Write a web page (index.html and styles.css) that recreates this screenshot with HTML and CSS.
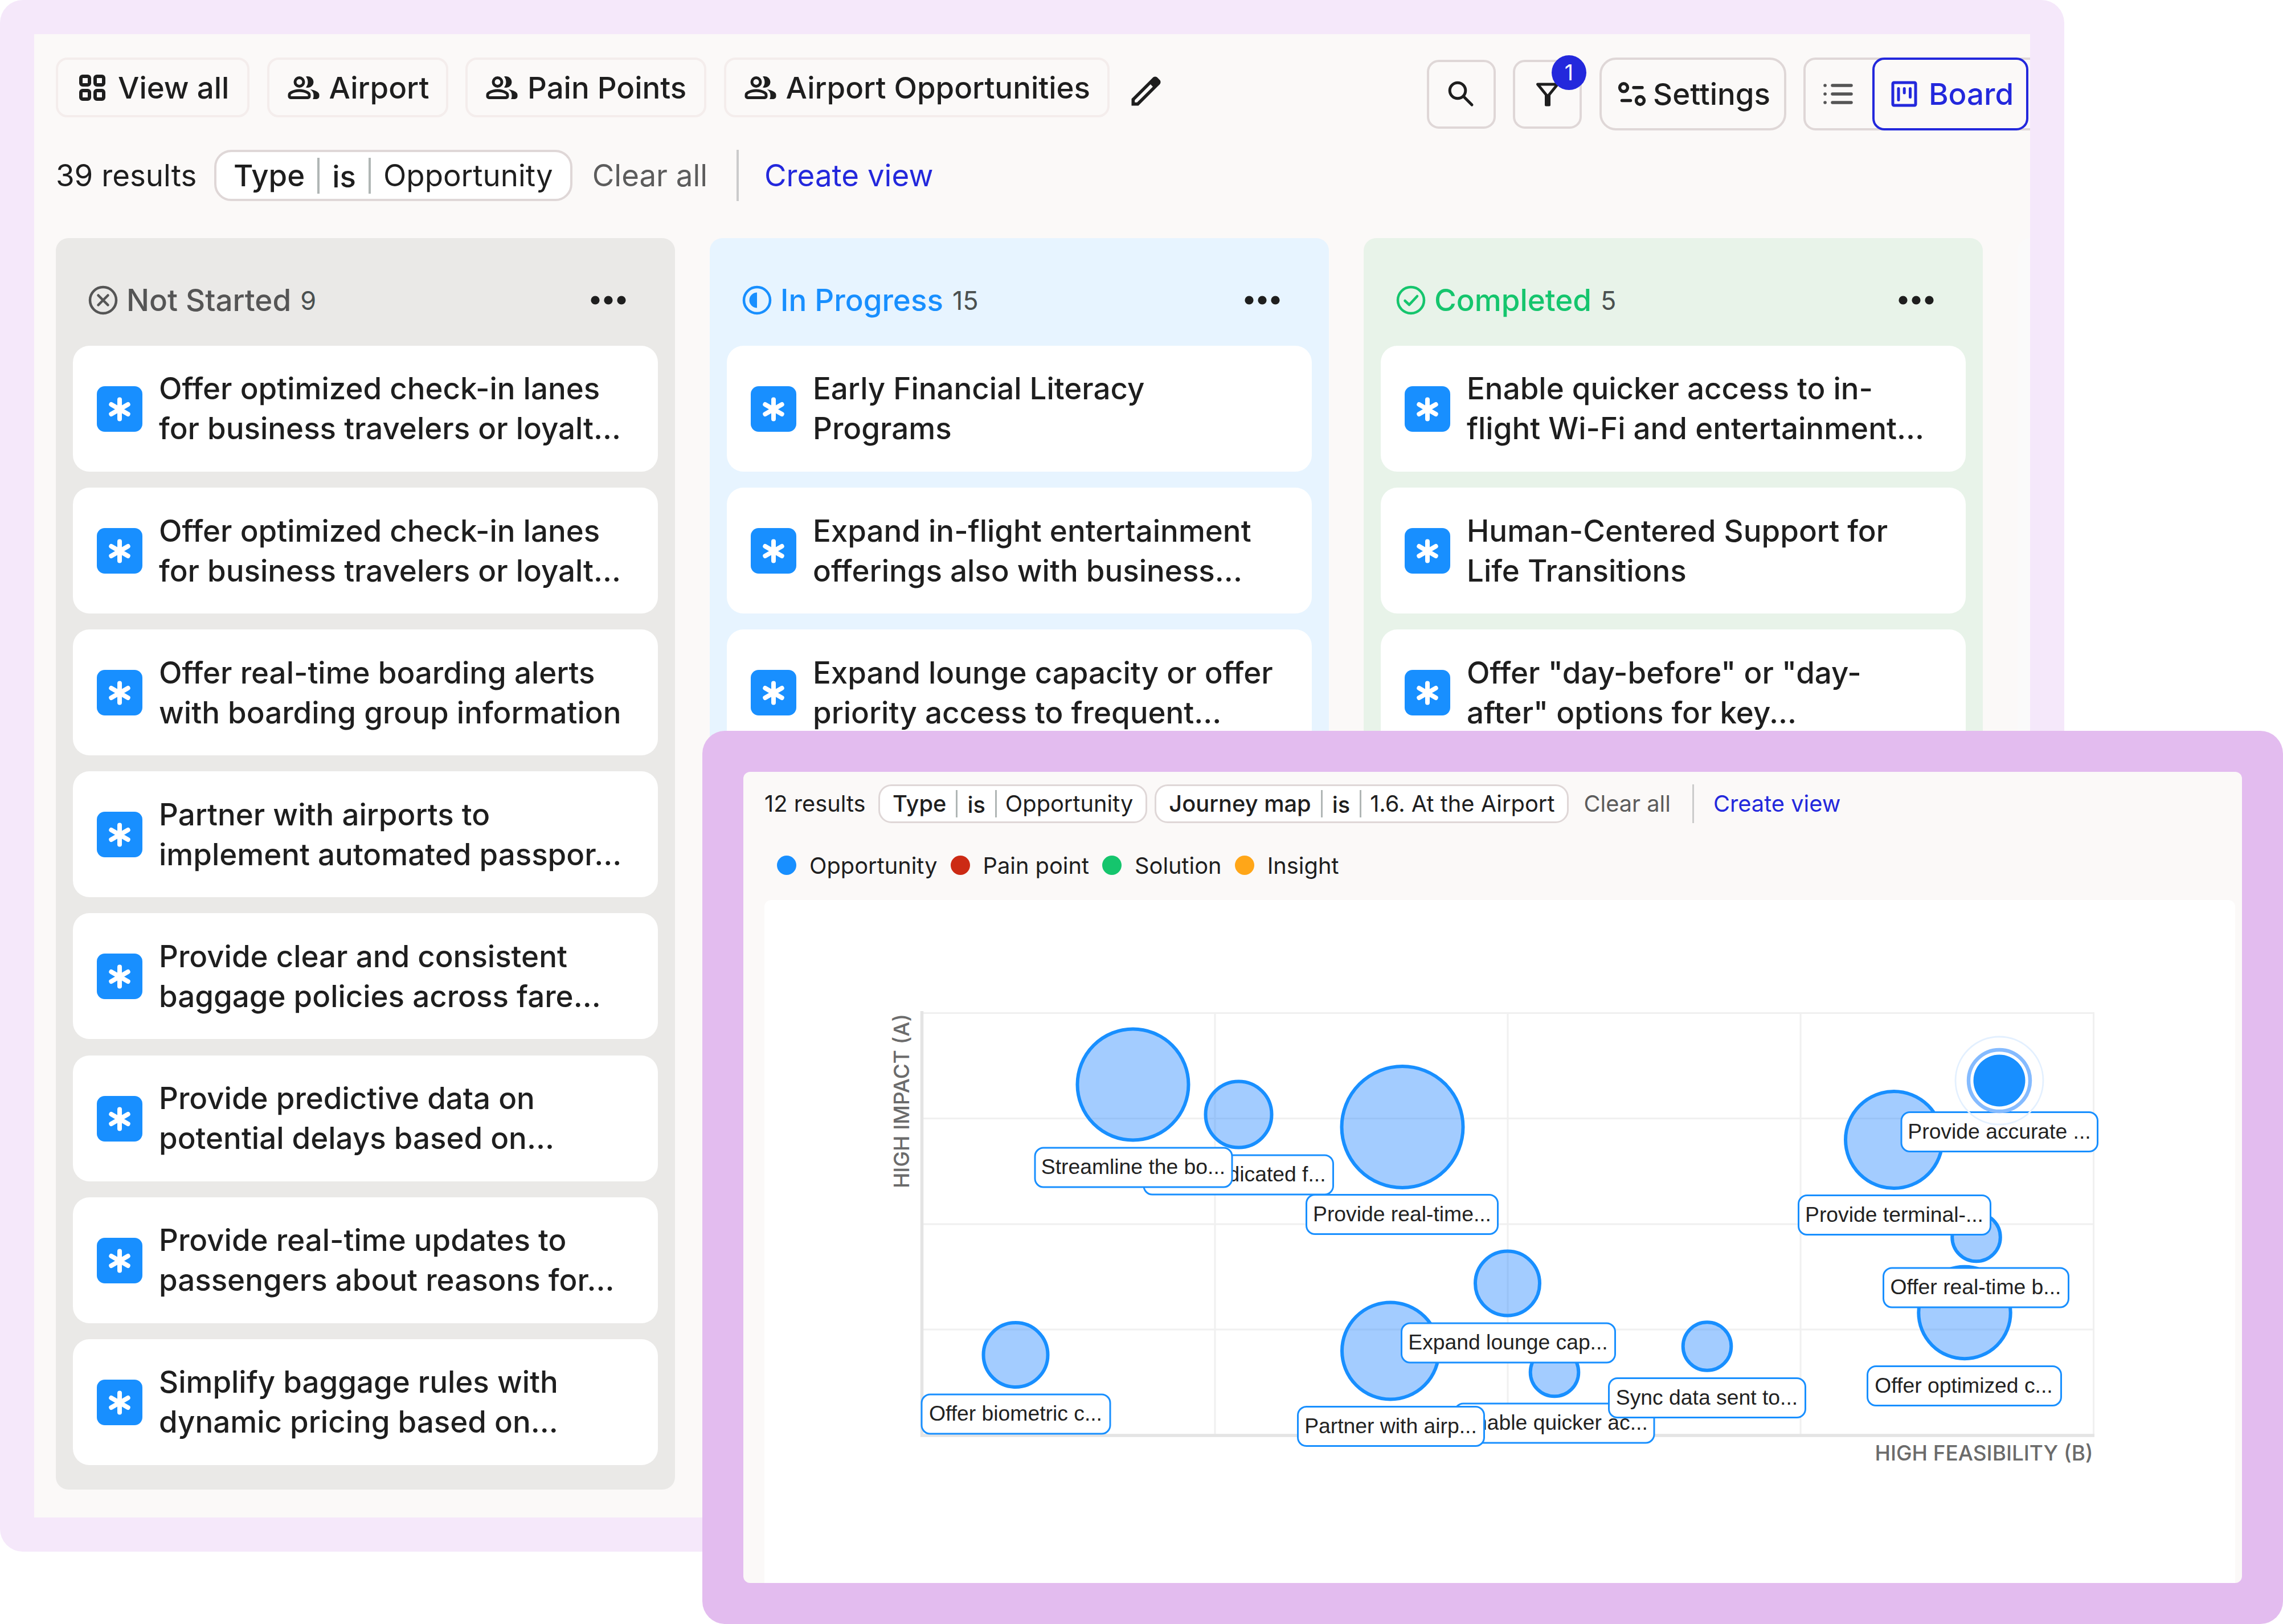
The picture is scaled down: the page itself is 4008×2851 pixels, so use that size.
FILE: index.html
```html
<!DOCTYPE html>
<html lang="en">
<head>
<meta charset="utf-8">
<title>Opportunities board</title>
<link rel="stylesheet" href="styles.css">
</head>
<body>
<svg class="defs" width="0" height="0" aria-hidden="true">
  <symbol id="people" viewBox="0 -960 960 960"><path d="M40-272q0-34 17.500-62.500T104-378q62-31 126-46.500T360-440q66 0 130 15.500T616-378q29 15 46.500 43.500T680-272v32q0 33-23.500 56.500T600-160H120q-33 0-56.500-23.500T40-240v-32Zm698 112q11-18 16.500-38.500T760-240v-40q0-44-24.500-84.500T666-434q51 6 96 20.500t84 35.500q36 20 55 44.500t19 53.500v40q0 33-23.500 56.500T840-160H738ZM360-480q-66 0-113-47t-47-113q0-66 47-113t113-47q66 0 113 47t47 113q0 66-47 113t-113 47Zm400-160q0 66-47 113t-113 47q-11 0-28-2.500t-28-5.500q27-32 41.500-71t14.500-81q0-42-14.500-81T544-792q14-5 28-6.500t28-1.500q66 0 113 47t47 113ZM120-240h480v-32q0-11-5.500-20T580-306q-54-27-109-40.500T360-360q-56 0-111 13.500T140-306q-9 5-14.500 14t-5.500 20v32Zm240-320q33 0 56.500-23.500T440-640q0-33-23.500-56.500T360-720q-33 0-56.500 23.500T280-640q0 33 23.500 56.500T360-560Z"/></symbol>
  <symbol id="star" viewBox="0 0 80 80"><path d="M40 23.500v34M25.300 32l29.400 17M54.700 32l-29.400 17" fill="none" stroke="#fff" stroke-width="8" stroke-linecap="round"/></symbol>
</svg>

<div class="window board-window">
  <main class="board">
    <header class="toolbar">
      <nav class="tabs">
        <a class="tab tab-all"><svg class="icon" viewBox="0 0 60 60"><g fill="none" stroke="currentColor" stroke-width="6"><rect x="10" y="10" width="15" height="15" rx="3"/><rect x="35" y="10" width="15" height="15" rx="3"/><rect x="10" y="35" width="15" height="15" rx="3"/><rect x="35" y="35" width="15" height="15" rx="3"/></g></svg><span>View all</span></a>
        <a class="tab tab-airport"><svg class="icon"><use href="#people"/></svg><span>Airport</span></a>
        <a class="tab tab-pain"><svg class="icon"><use href="#people"/></svg><span>Pain Points</span></a>
        <a class="tab tab-opps"><svg class="icon"><use href="#people"/></svg><span>Airport Opportunities</span></a>
        <svg class="icon pencil" viewBox="0 -960 960 960"><path d="M200-200h57l391-391-57-57-391 391v57Zm-80 80v-170l528-527q12-11 26.500-17t30.500-6q16 0 31 6t26 18l55 56q12 11 17.500 26t5.500 30q0 16-5.500 30.500T817-647L290-120H120Z"/></svg>
      </nav>
      <div class="tools">
        <button class="tool"><svg class="icon" viewBox="0 0 60 60"><g fill="none" stroke="currentColor" stroke-width="5" stroke-linecap="round"><circle cx="24" cy="24" r="13.800"/><path d="M34.500 34.500L49 49"/></g></svg></button>
        <button class="tool"><svg class="icon" viewBox="0 0 60 60"><path d="M12.500 13h35L30 34.500z" fill="none" stroke="currentColor" stroke-width="5" stroke-linejoin="round"/><path d="M25 31h10v18.500q0 2-2 2h-6q-2 0-2-2z" fill="currentColor"/></svg><span class="badge">1</span></button>
        <button class="settings"><svg class="icon" viewBox="0 0 60 60"><g fill="none" stroke="currentColor" stroke-width="5.400"><circle cx="15.500" cy="18.800" r="7"/><circle cx="44.500" cy="41.500" r="7"/><path d="M33 18.800h15M12.500 41.500h15" stroke-linecap="round"/></g></svg><span>Settings</span></button>
        <div class="switch">
          <button class="list"><svg class="icon" viewBox="0 0 60 60"><path d="M5 15h.1M5 30h.1M5 45h.1M18 15h33M18 30h33M18 45h33" fill="none" stroke="currentColor" stroke-width="5.500" stroke-linecap="round"/></svg></button>
          <button class="board-btn"><svg class="icon" viewBox="0 0 60 60"><g fill="none" stroke="currentColor" stroke-width="5" stroke-linecap="round"><rect x="10" y="10" width="40" height="40" rx="2"/><path d="M20 20.500v20M30.200 20.500v7.500M40.500 20.500v15"/></g></svg><span>Board</span></button>
        </div>
      </div>
    </header>

    <div class="filters">
      <span class="results">39 results</span>
      <div class="chip"><b>Type</b><i></i><b class="is">is</b><i></i><span>Opportunity</span></div>
      <span class="clear">Clear all</span>
      <hr>
      <a class="create">Create view</a>
    </div>

    <div class="columns">
      <section class="column gray">
        <h2><svg class="state" viewBox="0 0 52 52"><g fill="none" stroke="currentColor" stroke-width="4.500" stroke-linecap="round"><circle cx="26" cy="26" r="23"/><path d="M17.500 17.500l17 17M34.500 17.500l-17 17"/></g></svg><span class="name">Not Started</span><small>9</small><svg class="more" viewBox="0 0 62 16"><circle cx="8" cy="8" r="7.600"/><circle cx="31" cy="8" r="7.600"/><circle cx="54" cy="8" r="7.600"/></svg></h2>
        <article class="card"><svg class="type"><use href="#star"/></svg><p>Offer optimized check-in lanes<br>for business travelers or loyalt...</p></article>
        <article class="card"><svg class="type"><use href="#star"/></svg><p>Offer optimized check-in lanes<br>for business travelers or loyalt...</p></article>
        <article class="card"><svg class="type"><use href="#star"/></svg><p>Offer real-time boarding alerts<br>with boarding group information</p></article>
        <article class="card"><svg class="type"><use href="#star"/></svg><p>Partner with airports to<br>implement automated passpor...</p></article>
        <article class="card"><svg class="type"><use href="#star"/></svg><p>Provide clear and consistent<br>baggage policies across fare...</p></article>
        <article class="card"><svg class="type"><use href="#star"/></svg><p>Provide predictive data on<br>potential delays based on...</p></article>
        <article class="card"><svg class="type"><use href="#star"/></svg><p>Provide real-time updates to<br>passengers about reasons for...</p></article>
        <article class="card"><svg class="type"><use href="#star"/></svg><p>Simplify baggage rules with<br>dynamic pricing based on...</p></article>
      </section>
      <section class="column blue">
        <h2><svg class="state" viewBox="0 0 52 52"><circle cx="26" cy="26" r="23" fill="none" stroke="currentColor" stroke-width="4.500"/><path d="M26 12.500a13.500 13.500 0 0 0 0 27z" fill="currentColor"/></svg><span class="name">In Progress</span><small>15</small><svg class="more" viewBox="0 0 62 16"><circle cx="8" cy="8" r="7.600"/><circle cx="31" cy="8" r="7.600"/><circle cx="54" cy="8" r="7.600"/></svg></h2>
        <article class="card"><svg class="type"><use href="#star"/></svg><p>Early Financial Literacy<br>Programs</p></article>
        <article class="card"><svg class="type"><use href="#star"/></svg><p>Expand in-flight entertainment<br>offerings also with business...</p></article>
        <article class="card"><svg class="type"><use href="#star"/></svg><p>Expand lounge capacity or offer<br>priority access to frequent...</p></article>
      </section>
      <section class="column green">
        <h2><svg class="state" viewBox="0 0 52 52"><g fill="none" stroke="currentColor" stroke-width="4.500" stroke-linecap="round" stroke-linejoin="round"><circle cx="26" cy="26" r="23"/><path d="M15.500 27l7.500 7 14-15"/></g></svg><span class="name">Completed</span><small>5</small><svg class="more" viewBox="0 0 62 16"><circle cx="8" cy="8" r="7.600"/><circle cx="31" cy="8" r="7.600"/><circle cx="54" cy="8" r="7.600"/></svg></h2>
        <article class="card"><svg class="type"><use href="#star"/></svg><p>Enable quicker access to in-<br>flight Wi-Fi and entertainment...</p></article>
        <article class="card"><svg class="type"><use href="#star"/></svg><p>Human-Centered Support for<br>Life Transitions</p></article>
        <article class="card"><svg class="type"><use href="#star"/></svg><p>Offer "day-before" or "day-<br>after" options for key...</p></article>
      </section>
      <section class="column next"></section>
    </div>
  </main>
</div>

<div class="window chart-window">
  <main class="matrix">
    <div class="filters small">
      <span class="results">12 results</span>
      <div class="chip"><b>Type</b><i></i><b class="is">is</b><i></i><span>Opportunity</span></div>
      <div class="chip"><b>Journey map</b><i></i><b class="is">is</b><i></i><span>1.6. At the Airport</span></div>
      <span class="clear">Clear all</span>
      <hr>
      <a class="create">Create view</a>
    </div>
    <div class="legend">
      <span class="key opportunity">Opportunity</span>
      <span class="key pain">Pain point</span>
      <span class="key solution">Solution</span>
      <span class="key insight">Insight</span>
    </div>
    <div class="chart-card">
      <svg class="chart" viewBox="1342 1580 2582 1199">
        <g class="grid">
          <path d="M1619 1778.500H3677M1619 1963.500H3677M1619 2149H3677M1619 2334H3677M2133 1778V2518M2647 1778V2518M3161 1778V2518M3675.500 1778V2518"/>
        </g>
        <path class="axis" d="M1618.500 1775V2520H3677"/>
        <g class="bubbles">
          <circle cx="1989" cy="1904" r="97.500"/>
          <circle cx="2174.500" cy="1956.500" r="58"/>
          <circle cx="2462" cy="1978.500" r="106.500"/>
          <circle cx="2646.500" cy="2253" r="56.500"/>
          <circle cx="2441" cy="2371.500" r="85"/>
          <circle cx="1783" cy="2378.500" r="56.500"/>
          <circle cx="2729" cy="2409" r="42.300"/>
          <circle cx="2997" cy="2363.500" r="42.300"/>
          <circle cx="3325" cy="2001" r="85"/>
          <circle cx="3469.500" cy="2172" r="42.300"/>
          <circle cx="3449" cy="2304.500" r="80.700"/>
        </g>
        <g class="labels">
          <rect x="2008" y="2028" width="332.500" height="69"/><text x="2174.500" y="2074">Offer dedicated f...</text>
          <rect x="1817" y="2015" width="346" height="69"/><text x="1989.500" y="2061">Streamline the bo...</text>
          <rect x="2293.500" y="2097.500" width="336" height="69"/><text x="2461.500" y="2143.500">Provide real-time...</text>
          <rect x="2554" y="2464" width="350" height="69"/><text x="2729" y="2510">Enable quicker ac...</text>
          <rect x="2460.500" y="2323" width="375" height="69"/><text x="2647.500" y="2369">Expand lounge cap...</text>
          <rect x="2278.500" y="2469.500" width="327" height="69"/><text x="2441.500" y="2515.500">Partner with airp...</text>
          <rect x="1618" y="2448" width="331" height="69"/><text x="1783" y="2494">Offer biometric c...</text>
          <rect x="2824.500" y="2419.500" width="345" height="69"/><text x="2996.500" y="2465.500">Sync data sent to...</text>
          <rect x="3157.500" y="2098.500" width="337" height="69"/><text x="3325.500" y="2144.500">Provide terminal-...</text>
          <rect x="3338" y="1952.500" width="344.500" height="69"/><text x="3510" y="1998.500">Provide accurate ...</text>
          <rect x="3306.500" y="2226" width="325" height="69"/><text x="3468.500" y="2272">Offer real-time b...</text>
          <rect x="3278.500" y="2398.500" width="340" height="69"/><text x="3447.500" y="2444.500">Offer optimized c...</text>
        </g>
        <g class="selected">
          <circle class="dot" cx="3510" cy="1897" r="45.500"/>
          <circle class="ring" cx="3510" cy="1897" r="54"/>
          <circle class="halo" cx="3510" cy="1897" r="77"/>
        </g>
        <text class="axis-name" text-anchor="end" x="3674.500" y="2564">HIGH FEASIBILITY (B)</text>
        <text class="axis-name" text-anchor="end" transform="translate(1596 1780) rotate(-90)">HIGH IMPACT (A)</text>
      </svg>
    </div>
  </main>
</div>
</body>
</html>
```
FILE: styles.css
```css
* { box-sizing: border-box; }

body {
  margin: 0;
  width: 4008px;
  height: 2851px;
  position: relative;
  overflow: hidden;
  background: #fff;
  color: #1e1e1e;
  font-family: Inter, "Liberation Sans", sans-serif;
  font-size: 52.800px;
  line-height: 70px;
}

.defs { position: absolute; }
.icon { width: 60px; height: 60px; flex: none; fill: currentColor; }

.window { border-radius: 40px; }
.board-window { width: 3624px; height: 2724px; padding: 60px; background: #f5e8fa; }
.board { width: 3504px; height: 2604px; padding: 41px 0 0 38px; background: #fbf9f8; overflow: hidden; }

/* toolbar */
.toolbar { display: flex; height: 162px; align-items: flex-start; }
.tabs { display: flex; gap: 30.500px; align-items: center; height: 105px; }
.tab {
  display: flex;
  align-items: center;
  gap: 15px;
  height: 105px;
  padding-left: 30px;
  border: 4px solid #f4edec;
  border-radius: 20px;
  font-weight: 500;
  white-space: nowrap;
}
.tab-all { width: 340px; }
.tab-airport { width: 318px; }
.tab-pain { width: 423px; }
.tab-opps { width: 677px; }
.pencil { width: 68px; height: 68px; margin-top: 13px; }

.tools { display: flex; gap: 30.500px; align-items: center; margin-left: auto; margin-right: -98px; }
button {
  display: flex;
  align-items: center;
  justify-content: center;
  padding: 0;
  background: none;
  border: 4px solid #dfd7d7;
  color: inherit;
  font: inherit;
  font-weight: 500;
}
.tool { position: relative; width: 121px; height: 121px; border-radius: 21px; }
.badge {
  position: absolute;
  top: -12px;
  right: -12px;
  width: 61px;
  height: 61px;
  border-radius: 50%;
  background: #2328dc;
  color: #fff;
  font-size: 37.5px;
  font-weight: 400;
  line-height: 61px;
  text-align: center;
}
.settings { width: 328px; height: 128px; gap: 7px; border-radius: 29px; }
.switch { display: flex; width: 496px; height: 128px; border: 4px solid #dfd7d7; border-radius: 21px; }
.list { width: 117px; height: 120px; border: 0; color: #555; }
.board-btn { width: 274px; height: 128px; margin-top: -4px; gap: 13px; border-color: #2328dc; border-radius: 21px; color: #2328dc; }

/* filter row */
.filters { display: flex; height: 90px; line-height: 90px; white-space: nowrap; }
.results { width: 278px; }
.chip {
  display: flex;
  align-items: center;
  padding: 0 30px;
  background: #fff;
  border: 4px solid #dfd7d7;
  border-radius: 30px;
}
.chip b { font-weight: 500; }
.chip .is { position: relative; top: 2px; }
.chip i { width: 4px; height: 63px; margin: 0 22px; background: #b0b6b5; }
.clear { margin-left: 35px; color: #5c5c5c; }
.filters hr { width: 4px; height: 90px; margin: 0 45px 0 51px; border: 0; background: #cbcbcb; }
.create { color: #2328dc; }

/* columns */
.columns { display: flex; gap: 61px; margin-top: 65px; }
.column {
  flex: none;
  display: flex;
  flex-direction: column;
  gap: 28.140px;
  width: 1087px;
  height: 2197px;
  padding: 0 30px;
  border-radius: 22px;
}
.gray { background: #eae9e7; color: #555; }
.blue { background: #e7f4ff; color: #188fff; }
.green { background: #e8f3e9; color: #15c56d; }
.next { background: #fafafa; }
.column h2 {
  display: flex;
  align-items: center;
  height: 160.860px;
  margin: 0;
  padding: 58px 56px 0 27px;
  font-size: 52.900px;
  font-weight: 500;
}
.state { width: 52px; height: 52px; margin-right: 15px; }
.column small { margin-left: 16px; padding-top: 2px; font-size: 45px; font-weight: 400; color: #4a5050; }
.more { width: 62px; height: 16px; margin-left: auto; fill: #1e1e1e; }
.card {
  display: flex;
  align-items: center;
  flex: none;
  height: 221px;
  padding: 0 30px 0 41.500px;
  border-radius: 29px;
  background: #fff;
  color: #1e1e1e;
}
.type { flex: none; width: 80px; height: 80px; margin: 1px 29.500px 0 0; border-radius: 14px; background: #188fff; }
.card p { margin: 0; font-size: 52.850px; font-weight: 500; white-space: nowrap; }

/* prioritisation matrix */
.chart-window { position: absolute; left: 1233px; top: 1283px; width: 2775px; height: 1568px; padding: 72px; background: #e3bcef; }
.matrix { width: 2631px; height: 1424px; padding: 22px 12px 0 37px; border-radius: 12px; background: #fbf9f8; overflow: hidden; }
.small { height: 68px; line-height: 68px; font-size: 39.800px; }
.small .results { width: 200px; }
.small .chip { margin-right: 13px; padding: 0 22px; border-width: 3px; border-radius: 23px; }
.small .chip i { width: 3px; height: 48px; margin: 0 17px; }
.small .chip .is + i { margin-right: 15px; }
.small .clear { margin-left: 13px; }
.small hr { width: 3px; height: 68px; margin: 0 34px 0 38px; }
.legend { display: flex; gap: 23px; height: 135px; padding: 57px 0 0 22px; font-size: 39.800px; line-height: 35px; }
.key { display: flex; gap: 23px; }
.key::before { content: ""; width: 34px; height: 34px; border-radius: 50%; }
.opportunity::before { background: #188fff; }
.pain::before { background: #cc2a14; }
.solution::before { background: #15c56d; }
.insight::before { background: #ffa618; }

.chart-card { height: 1199px; border-radius: 12px 12px 0 0; background: #fff; overflow: hidden; }
.chart { display: block; width: 2582px; height: 1199px; }
.grid { fill: none; stroke: #f0f0f0; stroke-width: 3; }
.axis { fill: none; stroke: #e4e4e4; stroke-width: 5.500; }
.bubbles { fill: rgba(25, 128, 255, .4); stroke: #188fff; stroke-width: 6; }
.labels { font-family: "Liberation Sans", Arial, sans-serif; font-size: 37.300px; text-anchor: middle; fill: #222; }
.labels rect { rx: 15px; fill: #fff; stroke: #188fff; stroke-width: 3; }
.dot { fill: #188fff; }
.ring { fill: none; stroke: #85bbff; stroke-width: 6.500; }
.halo { fill: none; stroke: #e3f0ff; stroke-width: 2.800; }
.axis-name { font-size: 36.900px; font-weight: 500; fill: #6b6b6b; }
```
